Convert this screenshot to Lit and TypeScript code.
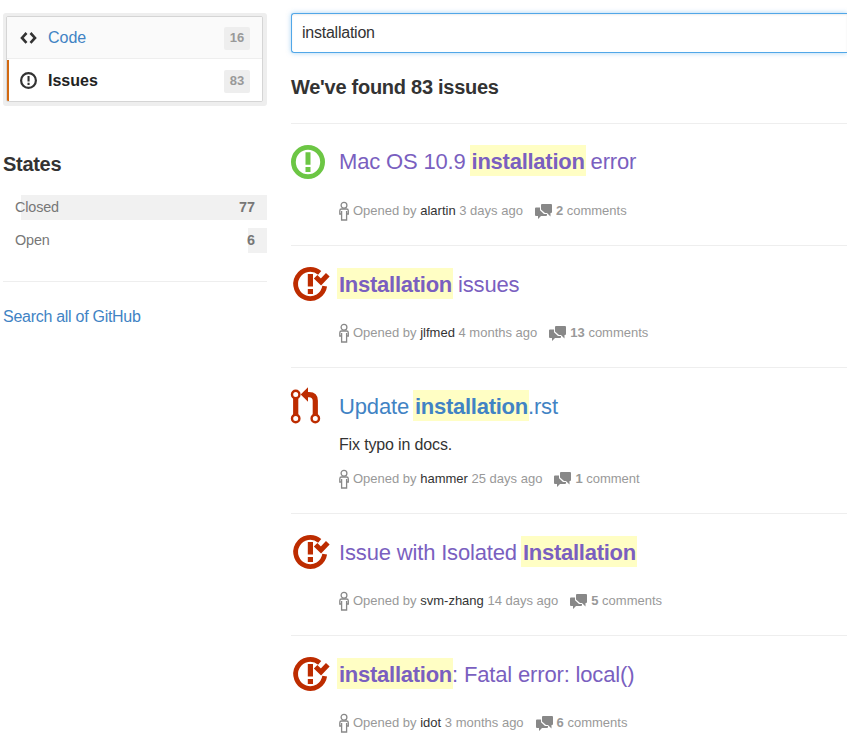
import { LitElement, html, css, svg, nothing } from "lit";
import { customElement, property } from "lit/decorators.js";

type Kind = "open" | "closed" | "pull";
interface Issue {
  kind: Kind;
  before: string;
  match: string;
  after: string;
  body?: string;
  user: string;
  when: string;
  count: number;
  unread?: boolean;
}

const issues: Issue[] = [
  { kind: "open", before: "Mac OS 10.9 ", match: "installation", after: " error", user: "alartin", when: "3 days ago", count: 2 },
  { kind: "closed", before: "", match: "Installation", after: " issues", user: "jlfmed", when: "4 months ago", count: 13 },
  { kind: "pull", before: "Update ", match: "installation", after: ".rst", body: "Fix typo in docs.", user: "hammer", when: "25 days ago", count: 1, unread: true },
  { kind: "closed", before: "Issue with Isolated ", match: "Installation", after: "", user: "svm-zhang", when: "14 days ago", count: 5 },
  { kind: "closed", before: "", match: "installation", after: ": Fatal error: local()", user: "idot", when: "3 months ago", count: 6 },
];

const stateIcons = {
  open: svg`<circle cx="17" cy="17" r="14.6" fill="none" stroke="currentColor" stroke-width="4.8"/>
    <path fill="currentColor" d="M14.500 7.200h5v12.600h-5zM14.500 22h5v5h-5z"/>`,
  closed: svg`<path fill="none" stroke="currentColor" stroke-width="4.8" d="M28.700 5.900A14.600 14.600 0 1 0 33.700 19.200"/>
    <path fill="currentColor" d="M16.800 7h5.200v12.600h-5.200zM16.800 22h5.200v5h-5.200z"/>
    <path fill="none" stroke="currentColor" stroke-width="5" d="M24.600 9.700l5.400 5.300 6.800-7.300"/>`,
  pull: svg`<g fill="none" stroke="currentColor"><circle cx="4.700" cy="6.500" r="3.700" stroke-width="2.400"/>
    <circle cx="4.700" cy="30.500" r="3.700" stroke-width="2.400"/><circle cx="24.300" cy="30.500" r="3.700" stroke-width="2.400"/>
    <path stroke-width="5.200" d="M4.700 10v17M15.500 6.600h2.500c4.300 0 6.300 2.300 6.300 6.200V27"/></g>
    <path fill="currentColor" d="M17-.8v14.600L9.700 6.500z"/>`,
};

@customElement("issue-row")
class IssueRow extends LitElement {
  @property({ attribute: false }) issue!: Issue;
  static styles = css`
    :host { display: flex; border-top: 1px solid #eee; padding: 20px 0 23px; }
    .state { width: 48px; flex: none; }
    .state svg { display: block; margin-top: 1px; overflow: visible; }
    .open { color: #6cc644; }
    .closed, .pull { color: #bd2c00; }
    .pull svg { margin-top: 0; }
    .main { white-space: nowrap; }
    .title { font-size: 22px; line-height: 36px; height: 36px; margin-bottom: 20px; letter-spacing: -0.16px; color: #7a5fc0; white-space: pre; }
    .title.unread { color: #4183c4; }
    .low { line-height: 38px; }
    em { font-style: normal; font-weight: bold; letter-spacing: -0.26px; background: #fffec4; padding: 4px 1px 2px 2px; margin: 0 -1px 0 -2px; }
    .low em { padding: 4px 1px 2px 2px; }
    .body { font-size: 16px; letter-spacing: -0.15px; line-height: 24px; margin: -11px 0 11px; color: #333; }
    .meta { display: flex; align-items: center; height: 21px; margin-bottom: 1px; font-size: 13px; line-height: 21px; color: #999; white-space: pre; }
    .meta svg { flex: none; color: #888; }
    .person { margin-right: 4px; }
    .talk { margin: 0 4px 0 12px; }
    .user { color: #333; }
    b { font-weight: bold; }
  `;
  render() {
    const i = this.issue;
    return html`
      <div class="state ${i.kind}"><svg width="40" height="38" viewBox="0 0 40 38">${stateIcons[i.kind]}</svg></div>
      <div class="main">
        <div class="title ${i.unread ? "unread" : ""} ${i.kind === "open" ? "" : "low"}">${i.before}<em>${i.match}</em>${i.after}</div>
        ${i.body ? html`<div class="body">${i.body}</div>` : nothing}
        <div class="meta"><svg class="person" width="10" height="20" viewBox="0 0 10 20" fill="none" stroke="currentColor" stroke-width="1.3"><circle cx="5" cy="4.200" r="2.900"/><path d="M2.500 8h5q1.800 0 1.800 1.800V13H7.600v6H2.600v-6H.8V9.800Q.8 8 2.500 8zM2.600 10v3M7.600 10v3"/></svg><span>Opened by </span><span class="user">${i.user}</span><span> ${i.when}</span><svg class="talk" width="17" height="16" viewBox="0 0 17 16" fill="currentColor"><path d="M7 1h9q1 0 1 1v7q0 1-1 1h-.5v3.500L12 10H10L6 6.500V2q0-1 1-1z"/><path d="M1 4.500h4v2.700l4 3.800h3v1q0 1-1 1H6L3 16v-3H1q-1 0-1-1V5.500q0-1 1-1z"/></svg><b>${i.count}</b><span> comment${i.count === 1 ? "" : "s"}</span></div>
      </div>`;
  }
}

@customElement("app-root")
class AppRoot extends LitElement {
  static styles = css`
    :host { display: grid; grid-template-columns: 264px 1fr; column-gap: 24px; height: 750px; padding: 13px 0 0 3px; box-sizing: border-box; overflow: hidden; background: #fff; color: #333; font-family: "Liberation Sans", Arial, sans-serif; }
    .menu { border: 3px solid #eee; border-radius: 3px; height: 93px; box-sizing: border-box; background: #eee; padding-right: 1px; }
    .box { border: 1px solid #d5d5d5; border-radius: 2px; height: 86px; box-sizing: border-box; background: #fff; overflow: hidden; }
    .item { display: flex; align-items: center; height: 42px; box-sizing: border-box; padding: 1px 12px 0 13px; font-size: 16px; color: #4183c4; background: #fafafa; border-bottom: 1px solid #eee; }
    .item svg { width: 17px; height: 17px; margin-right: 11px; color: #333; }
    .item.on { margin-top: 1px; height: 41px; padding-top: 0; color: #222; font-weight: bold; background: #fff; border-left: 2px solid #d26911; padding-left: 11px; border-bottom: 0; }
    .badge { margin-left: auto; width: 26px; height: 23px; line-height: 22px; text-align: center; background: #eee; border-radius: 2px; color: #999; font-size: 13px; font-weight: bold; }
    .on .badge { margin-top: 2px; }
    h3 { margin: 0; font-size: 20px; line-height: 24px; letter-spacing: -0.3px; }
    aside h3 { margin: 46px 0 19px; }
    .bar { display: flex; justify-content: space-between; height: 25px; line-height: 24px; margin-bottom: 8px; padding: 0 12px; font-size: 14.4px; color: #777; background: linear-gradient(#f1f1f1, #f1f1f1) right / var(--w) 100% no-repeat; }
    .bar span { letter-spacing: -0.15px; }
    .all { border-top: 1px solid #eee; margin-top: 28px; padding-top: 24px; font-size: 16px; line-height: 22px; letter-spacing: -0.28px; color: #4183c4; }
    .search { height: 40px; box-sizing: border-box; border: 1px solid #51a7e8; border-right: 0; border-radius: 3px 0 0 3px; padding-left: 10px; line-height: 38px; font-size: 16px; letter-spacing: -0.24px; box-shadow: inset 0 1px 2px rgba(0,0,0,.075), 0 0 5px rgba(81,167,232,.5); }
    main h3 { margin: 22px 0 24px; letter-spacing: -0.27px; }
  `;
  render() {
    return html`
      <aside>
        <div class="menu"><div class="box">
          <div class="item"><svg viewBox="0 0 17 17" fill="none" stroke="currentColor" stroke-width="2.600"><path d="M6.500 3L2 7.900l4.500 4.900M10.500 3L15 7.900l-4.500 4.900"/></svg>Code<span class="badge">16</span></div>
          <div class="item on"><svg viewBox="0 0 34 34"><circle cx="17" cy="17" r="14.800" fill="none" stroke="currentColor" stroke-width="4.400"/><path fill="currentColor" d="M15 8h4.200v11H15zM15 21.500h4.200v4.500H15z"/></svg>Issues<span class="badge">83</span></div>
        </div></div>
        <h3>States</h3>
        <div class="bar" style="--w:246px"><span>Closed</span><b>77</b></div>
        <div class="bar" style="--w:19px"><span>Open</span><b>6</b></div>
        <div class="all">Search all of GitHub</div>
      </aside>
      <main>
        <div class="search">installation</div>
        <h3>We've found 83 issues</h3>
        ${issues.map((i) => html`<issue-row .issue=${i}></issue-row>`)}
      </main>`;
  }
}
